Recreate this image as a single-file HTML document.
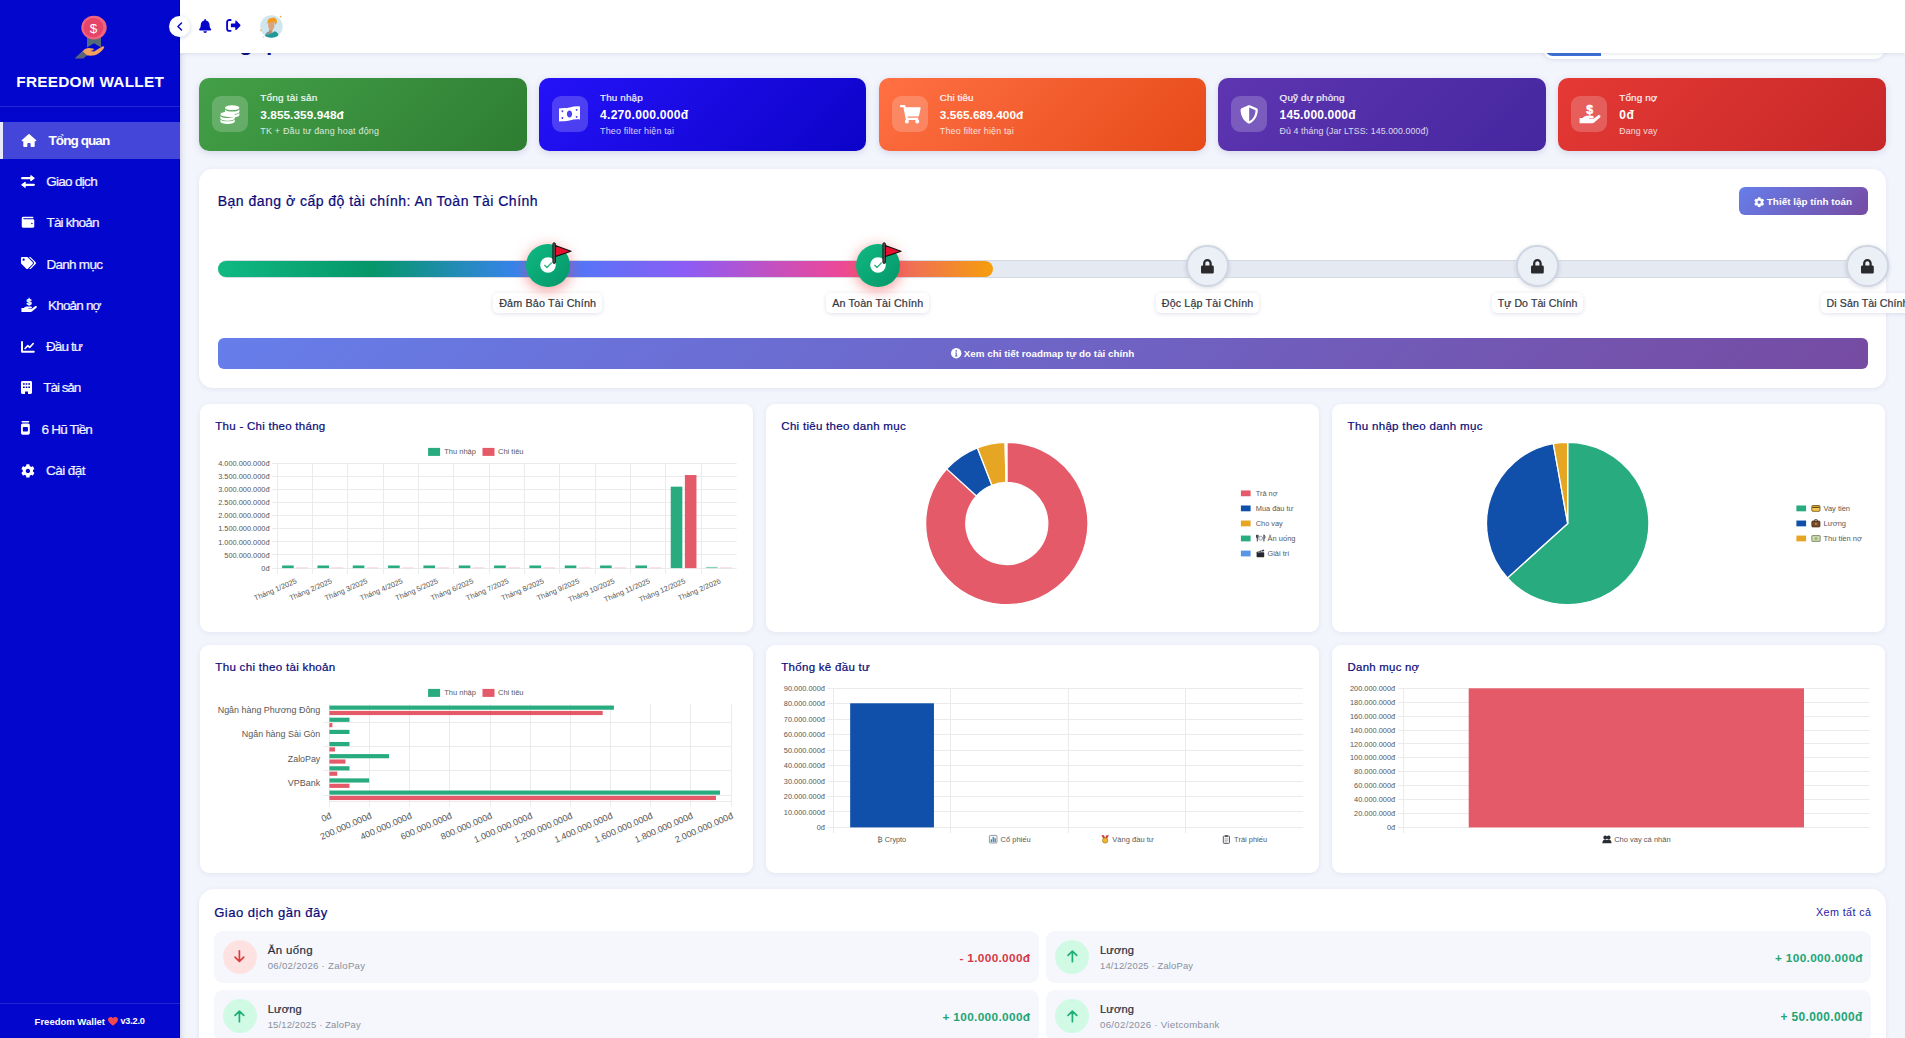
<!DOCTYPE html>
<html lang="vi"><head><meta charset="utf-8"><title>Freedom Wallet</title>
<style>
html,body{margin:0;padding:0}
html{overflow:hidden;width:1905px;height:1038px;background:#f3f5fd}
body{width:1905px;height:1038px;overflow:hidden;position:relative;background:#f3f5fd;font-family:"Liberation Sans",sans-serif;}
.a{position:absolute;box-sizing:border-box}
.t{position:absolute;white-space:nowrap;font-family:"Liberation Sans",sans-serif}
svg{display:block;overflow:visible}
svg text{font-family:"Liberation Sans",sans-serif}
#w{position:absolute;left:0;top:0;width:1905px;height:1038px;overflow:hidden}
</style></head><body>
<div id="w">
<span class="t" style="left:199px;top:29.7px;font-size:22px;line-height:26px;color:#0b0b78;font-weight:700;">Tổng quan</span>
<div class="a" style="left:1542.5px;top:20px;width:342.5px;height:38.7px;background:#fff;border-radius:10px;box-shadow:0 1px 4px rgba(50,60,100,.13);"></div>
<div class="a" style="left:1545px;top:22px;width:56px;height:34px;background:#3b6fd9;border-radius:8px 0 0 8px;"></div>
<div class="a" style="left:180px;top:0px;width:1725px;height:53px;background:#fff;box-shadow:0 1px 4px rgba(60,66,100,.13);"></div>
<svg class="a" style="left:198.8px;top:19px;" width="12.3" height="14" viewBox="0 0 448 512"><path fill="#0505cc" d="M224 512c35.320 0 63.970-28.650 63.970-64H160.030c0 35.350 28.650 64 63.970 64zm215.390-149.710c-19.320-20.760-55.470-51.990-55.470-154.290 0-77.700-54.480-139.900-127.940-155.160V32c0-17.670-14.320-32-31.980-32s-31.980 14.330-31.980 32v20.840C118.560 68.100 64.080 130.300 64.080 208c0 102.300-36.150 133.530-55.470 154.290-6 6.450-8.660 14.160-8.610 21.710.11 16.400 12.980 32 32.100 32h383.800c19.120 0 32-15.600 32.100-32 .05-7.550-2.610-15.270-8.610-21.710z"/></svg>
<svg class="a" style="left:226px;top:19.3px;" width="14" height="12.8" viewBox="0 0 14 13"><path fill="none" stroke="#0505cc" stroke-width="1.900" stroke-linecap="round" stroke-linejoin="round" d="M4.600 1H3.200C2 1 1 2 1 3.200v6.600C1 11 2 12 3.200 12h1.400"/><path fill="#0505cc" d="M9.300 2.300c0-.6.700-.9 1.100-.5l4 4.100c.3.300.3.800 0 1.100l-4 4.100c-.4.400-1.100.1-1.100-.5V8.400H5.700c-.5 0-.9-.4-.9-.9V5.500c0-.5.400-.9.900-.9h3.600z"/></svg>
<svg class="a" style="left:260px;top:15px;" width="23" height="23" viewBox="0 0 23 23"><defs><clipPath id="avc"><circle cx="11.400" cy="11.500" r="11.200"/></clipPath></defs><circle cx="11.400" cy="11.500" r="11.200" fill="#cfe6ee"/><g clip-path="url(#avc)"><path d="M4.800 23c0-3.800 1.800-5.800 4.200-6.400l2.400 1.600 3.400-2c2.600.6 4 2.800 4 6.800z" fill="#1f9a97"/><path d="M5.600 18.400l3.600-2 1.800 1.800-3.600 2z" fill="#8b98a0"/><path d="M9 14.600h3.400v3l-1.600 1-1.800-1.200z" fill="#c98e6a"/><path d="M8.200 8c0-1.800 1.400-2.800 3.200-2.800s3 1.200 3 3v2.800c0 2.200-1.300 4.400-3 4.400S8.200 13 8.200 11z" fill="#dca47c"/><path d="M7.800 9.400C6.800 5.400 8.600 3 11.400 3c1.600-1.200 4.800-.6 5.200 2 .8 1.800 0 3.800-1.400 4.800-.2-1.600-.8-2.600-1.800-3.200-1.400.8-3 1-4.200.8-.8.400-1.200 1-1.400 2z" fill="#f39a1f"/></g><circle cx="20.600" cy="1.600" r=".9" fill="#e8a93a"/><circle cx="1" cy="15.400" r=".8" fill="#f0b44a"/><circle cx="3.400" cy="22" r=".6" fill="#9fb3c8"/></svg>
<div class="a" style="left:0px;top:0px;width:180px;height:1038px;background:#0306cd;border-right:1px solid #0202a6;"></div>
<div class="a" style="left:180px;top:53px;width:7px;height:985px;background:linear-gradient(90deg,rgba(70,80,110,.15),rgba(70,80,110,.04) 50%,rgba(70,80,110,0));"></div>
<svg class="a" style="left:72px;top:13px;" width="36" height="48" viewBox="0 0 36 48"><path d="M15 24h14v10.400l-7-4.200-7 4.200z" fill="#546b78"/><ellipse cx="22" cy="14.600" rx="12.700" ry="11.800" fill="#f0657e"/><ellipse cx="21.400" cy="14.600" rx="10" ry="9.600" fill="#e6456a"/><text x="21.600" y="19.600" font-size="13.500" text-anchor="middle" fill="#fff">$</text><path d="M2.600 45.600l8.400-8.200 5 4.200-4.600 4z" fill="#5b6478"/><path d="M10.600 38.400c2.200-3 5.200-3.600 8-3.200l2.400.2c1 .2 1.200 1.400.2 1.800l-2.800.8 3.600.6 8.200-5.200c1.200-.8 2.600.4 1.800 1.600-2.400 3.400-5.600 6.200-9.200 7.200-2.400.6-4.800.4-7.400.4z" fill="#f3a15c"/></svg>
<span class="t" style="left:16.25px;top:72.5px;font-size:15.36px;line-height:18px;color:#fff;font-weight:700;letter-spacing:0.26px;">FREEDOM WALLET</span>
<div class="a" style="left:0px;top:106px;width:180px;height:1px;background:rgba(255,255,255,.13);"></div>
<div class="a" style="left:0px;top:122px;width:180px;height:37px;background:#4346d8;border-left:3px solid #e8e8fb;"></div>
<svg class="a" style="left:21px;top:134px;" width="16" height="13" viewBox="0 0 576 512"><path fill="#fff" d="M575.8 255.5c0 18-15 32.1-32 32.1h-32l.7 160.2c0 2.7-.2 5.4-.5 8.1V472c0 22.1-17.9 40-40 40H456c-1.1 0-2.2 0-3.3-.1c-1.4 .1-2.800 .1-4.200 .1H416 392c-22.1 0-40-17.9-40-40V448 384c0-17.7-14.300-32-32-32H256c-17.700 0-32 14.300-32 32v64 24c0 22.1-17.900 40-40 40H160 128.100c-1.500 0-3-.1-4.500-.2c-1.200 .1-2.400 .2-3.600 .2H104c-22.100 0-40-17.900-40-40V360c0-.9 0-1.900 .1-2.800V287.600H32c-18 0-32-14-32-32.100c0-9 3-17 10-24L266.400 8c7-7 15-8 22-8s15 2 21 7L564.800 231.500c8 7 12 15 11 24z"/></svg>
<span class="t" style="left:48.5px;top:132.5px;font-size:13.54px;line-height:16px;color:#fff;font-weight:700;letter-spacing:-0.93px;">Tổng quan</span>
<svg class="a" style="left:21px;top:175px;" width="14" height="13" viewBox="0 0 14 13"><path fill="none" stroke="#fff" stroke-width="2.300" stroke-linecap="round" d="M1.200 3.200H10.500M12.800 9.800H3.500"/><path fill="#fff" stroke="#fff" stroke-width="1" stroke-linejoin="round" d="M9.800 .5L13.400 3.200L9.800 5.900zM4.200 7.100L.6 9.800L4.200 12.500z"/></svg>
<span class="t" style="left:46.2px;top:173.7px;font-size:13.54px;line-height:16px;color:#f1f1ff;letter-spacing:-0.71px;-webkit-text-stroke:.22px currentColor;">Giao dịch</span>
<svg class="a" style="left:21px;top:216px;" width="14" height="12.5" viewBox="0 0 512 512"><path fill="#fff" d="M461.2 128H80c-8.84 0-16-7.16-16-16s7.16-16 16-16h384c8.84 0 16-7.16 16-16 0-26.51-21.49-48-48-48H64C28.65 32 0 60.65 0 96v320c0 35.35 28.65 64 64 64h397.2c28.02 0 50.8-21.53 50.8-48V176c0-26.47-22.78-48-50.8-48zM416 336c-17.67 0-32-14.33-32-32s14.33-32 32-32 32 14.33 32 32-14.33 32-32 32z"/></svg>
<span class="t" style="left:46.4px;top:214.8px;font-size:13.54px;line-height:16px;color:#f1f1ff;letter-spacing:-0.78px;-webkit-text-stroke:.22px currentColor;">Tài khoản</span>
<svg class="a" style="left:21px;top:257px;" width="15" height="12" viewBox="0 0 640 512"><path fill="#fff" d="M497.941 225.941L286.059 14.059A48 48 0 0 0 252.118 0H48C21.49 0 0 21.49 0 48v204.118a48 48 0 0 0 14.059 33.941l211.882 211.882c18.744 18.745 49.136 18.746 67.882 0l204.118-204.118c18.745-18.745 18.745-49.137 0-67.882zM112 160c-26.51 0-48-21.49-48-48s21.49-48 48-48 48 21.49 48 48-21.49 48-48 48zm513.941 133.823L421.823 497.941c-18.745 18.745-49.137 18.745-67.882 0l-.36-.36L527.64 323.522c16.999-16.999 26.36-39.6 26.36-63.64s-9.362-46.641-26.36-63.64L331.397 0h48.721a48 48 0 0 1 33.941 14.059l211.882 211.882c18.745 18.745 18.745 49.137 0 67.882z"/></svg>
<span class="t" style="left:46.4px;top:256.7px;font-size:13.54px;line-height:16px;color:#f1f1ff;letter-spacing:-0.73px;-webkit-text-stroke:.22px currentColor;">Danh mục</span>
<svg class="a" style="left:21px;top:298px;" width="16" height="13.8" viewBox="0 0 22 19"><path fill="#fff" transform="translate(0 .6)" d="M0.6 13.2h3.2c1.6-1.5 3.2-2.1 5-2.1h4.5c1 0 1.7.6 1.7 1.4 0 .8-.7 1.4-1.7 1.4h-3.1v.5h4.2l4.9-3.7c.8-.6 1.8-.5 2.3.1.5.6.4 1.5-.3 2.1l-5.8 4.9c-.6.5-1.300.8-2.100.8H0.600z"/><text x="10.9" y="9.500" font-size="12.500" font-weight="700" text-anchor="middle" fill="#fff" stroke="#fff" stroke-width=".5">$</text></svg>
<span class="t" style="left:48px;top:297.9px;font-size:13.54px;line-height:16px;color:#f1f1ff;letter-spacing:-0.83px;-webkit-text-stroke:.22px currentColor;">Khoản nợ</span>
<svg class="a" style="left:21.3px;top:340.5px;" width="13.8" height="11.8" viewBox="0 0 14 12"><path fill="none" stroke="#fff" stroke-width="2" stroke-linecap="round" stroke-linejoin="round" d="M1 1V11H13"/><path fill="none" stroke="#fff" stroke-width="1.700" stroke-linecap="round" stroke-linejoin="round" d="M4.2 7.6L6.800 4.800L8.800 6.600L12.400 2.600"/></svg>
<span class="t" style="left:46px;top:339.1px;font-size:13.54px;line-height:16px;color:#f1f1ff;letter-spacing:-0.92px;-webkit-text-stroke:.22px currentColor;">Đầu tư</span>
<svg class="a" style="left:21.3px;top:380.7px;" width="11" height="13" viewBox="0 0 11 13"><path fill="#fff" fill-rule="evenodd" d="M1.4 0h8.200c.8 0 1.400.6 1.400 1.400v10.200c0 .8-.6 1.400-1.400 1.400H7v-2.600H4V13H1.400C.6 13 0 12.400 0 11.600V1.400C0 .6.600 0 1.400 0zM2 2.200v1.600h1.700V2.200zM4.650 2.200v1.600h1.700V2.200zM7.300 2.200v1.600H9V2.200zM2 5.400V7h1.700V5.400zM4.650 5.400V7h1.700V5.400zM7.300 5.400V7H9V5.400z"/></svg>
<span class="t" style="left:43.3px;top:379.6px;font-size:13.54px;line-height:16px;color:#f1f1ff;letter-spacing:-1.05px;-webkit-text-stroke:.22px currentColor;">Tài sản</span>
<svg class="a" style="left:21.3px;top:421px;" width="8.8" height="13.8" viewBox="0 0 9 14"><path fill="#fff" fill-rule="evenodd" d="M1.300 0h6.400c.5 0 .8.300.8.800s-.3.800-.8.800H1.300C.800 1.600.5 1.300.5.800S.800 0 1.300 0zM1.800 2.600h5.400C8.200 2.600 9 3.400 9 4.400v7.800c0 1-.8 1.800-1.800 1.800H1.800C.8 14 0 13.200 0 12.200V4.400c0-1 .8-1.800 1.800-1.800zM2.600 6.200c-.4 0-.7.300-.7.700v3c0 .4.300.7.700.7h3.800c.4 0 .7-.3.700-.7v-3c0-.4-.3-.7-.7-.7z"/></svg>
<span class="t" style="left:41.6px;top:421.5px;font-size:13.54px;line-height:16px;color:#f1f1ff;letter-spacing:-0.83px;-webkit-text-stroke:.22px currentColor;">6 Hũ Tiền</span>
<svg class="a" style="left:21.3px;top:464px;" width="13.8" height="13.8" viewBox="0 0 512 512"><path fill="#fff" d="M487.4 315.7l-42.600-24.600c4.300-23.200 4.300-47 0-70.200l42.600-24.600c4.900-2.800 7.100-8.600 5.500-14-11.100-35.600-30-67.800-54.700-94.600-3.800-4.100-10-5.100-14.800-2.300L380.800 110c-17.900-15.400-38.500-27.300-60.800-35.100V25.800c0-5.600-3.900-10.500-9.400-11.700-36.700-8.200-74.300-7.800-109.200 0-5.500 1.200-9.400 6.100-9.400 11.700V75c-22.200 7.900-42.800 19.800-60.800 35.100L88.700 85.500c-4.900-2.800-11-1.900-14.800 2.300-24.700 26.700-43.600 58.900-54.700 94.600-1.700 5.400.6 11.200 5.500 14L67.300 221c-4.300 23.200-4.300 47 0 70.200l-42.600 24.600c-4.900 2.800-7.100 8.600-5.500 14 11.100 35.600 30 67.800 54.700 94.600 3.800 4.100 10 5.100 14.800 2.300l42.600-24.600c17.900 15.400 38.500 27.300 60.800 35.100v49.200c0 5.600 3.900 10.500 9.400 11.700 36.700 8.200 74.300 7.800 109.200 0 5.500-1.200 9.400-6.100 9.400-11.700v-49.200c22.200-7.900 42.800-19.800 60.800-35.100l42.600 24.600c4.900 2.800 11 1.900 14.800-2.300 24.700-26.700 43.600-58.900 54.700-94.600 1.500-5.500-.7-11.300-5.600-14.100zM256 336c-44.100 0-80-35.900-80-80s35.900-80 80-80 80 35.900 80 80-35.900 80-80 80z"/></svg>
<span class="t" style="left:46px;top:462.8px;font-size:13.54px;line-height:16px;color:#f1f1ff;letter-spacing:-0.58px;-webkit-text-stroke:.22px currentColor;">Cài đặt</span>
<div class="a" style="left:0px;top:1002.5px;width:180px;height:1px;background:rgba(255,255,255,.13);"></div>
<span class="t" style="left:34.6px;top:1016px;font-size:9.51px;line-height:11px;color:#fff;font-weight:700;">Freedom Wallet</span>
<svg class="a" style="left:108px;top:1016.8px;" width="10" height="9" viewBox="0 0 10 9"><path d="M5 8.800C1.800 6.200 0 4.600 0 2.600 0 1.100 1.100 0 2.600 0 3.600 0 4.500.5 5 1.300 5.500.5 6.400 0 7.400 0 8.900 0 10 1.100 10 2.600c0 2-1.800 3.600-5 6.200z" fill="#f4484e"/></svg>
<span class="t" style="left:120.4px;top:1016px;font-size:9.17px;line-height:11px;color:#fff;font-weight:700;letter-spacing:-0.18px;">v3.2.0</span>
<div class="a" style="left:169px;top:15.8px;width:21px;height:21px;background:#fff;border-radius:50%;box-shadow:0 1px 4px rgba(40,50,140,.22);"></div>
<svg class="a" style="left:176.6px;top:21.8px;" width="5.4" height="9" viewBox="0 0 6 10"><path fill="none" stroke="#0505cc" stroke-width="1.600" stroke-linecap="round" stroke-linejoin="round" d="M5 1L1 5L5 9"/></svg>
<div class="a" style="left:199px;top:78px;width:327.6px;height:72.8px;background:linear-gradient(135deg,#43a047 0%,#2e7d32 100%);border-radius:10px;box-shadow:0 2px 7px rgba(40,50,110,.15);"></div>
<div class="a" style="left:212px;top:96px;width:36px;height:36px;background:rgba(255,255,255,.2);border-radius:9px;"></div>
<svg class="a" style="left:220px;top:103.5px;" width="20" height="20" viewBox="0 0 20 20"><path fill="#fff" d="M5 8.65 v2.4 a7.2 2.45 0 0 0 14.4 0 v-2.4 a7.2 2.2 0 0 1 -14.4 0z"/><path fill="#fff" d="M5 5.35 v2.4 a7.2 2.45 0 0 0 14.4 0 v-2.4 a7.2 2.2 0 0 1 -14.4 0z"/><ellipse cx="12.2" cy="3.65" rx="7.2" ry="2.45" fill="#fff"/><path fill="#fff" d="M0.4 15.15 v2.4 a7.2 2.45 0 0 0 14.4 0 v-2.4 a7.2 2.2 0 0 1 -14.4 0z"/><path fill="#fff" d="M0.4 11.85 v2.4 a7.2 2.45 0 0 0 14.4 0 v-2.4 a7.2 2.2 0 0 1 -14.4 0z"/><ellipse cx="7.6" cy="10.15" rx="7.2" ry="2.45" fill="#fff"/></svg>
<span class="t" style="left:260.3px;top:92.1px;font-size:9.98px;line-height:12px;color:#fff;letter-spacing:0.19px;opacity:0.93;-webkit-text-stroke:.22px currentColor;">Tổng tài sản</span>
<span class="t" style="left:260.3px;top:108px;font-size:11.81px;line-height:14px;color:#fff;font-weight:700;letter-spacing:0.06px;">3.855.359.948đ</span>
<span class="t" style="left:260.3px;top:126px;font-size:8.98px;line-height:11px;color:#fff;letter-spacing:0.19px;opacity:0.8;">TK + Đầu tư đang hoạt động</span>
<div class="a" style="left:538.75px;top:78px;width:327.6px;height:72.8px;background:linear-gradient(135deg,#2512f8 0%,#0c03c8 100%);border-radius:10px;box-shadow:0 2px 7px rgba(40,50,110,.15);"></div>
<div class="a" style="left:551.75px;top:96px;width:36px;height:36px;background:rgba(255,255,255,.2);border-radius:9px;"></div>
<svg class="a" style="left:559.15px;top:106.2px;" width="21" height="16" viewBox="0 0 21 16"><path fill="#fff" fill-rule="evenodd" d="M0 2.600C3.500 1.600 7 2.200 10.500 1.400S17.500 0 21 .4V13.400c-3.500-.4-7 .2-10.500 1S3.500 15 0 15.600zM10.500 4.600c-1.500 0-2.600 1.500-2.600 3.400s1.100 3.400 2.600 3.400 2.600-1.500 2.600-3.400-1.100-3.400-2.600-3.400zM3.400 4.300a.9.900 0 1 0 .01 0zM3.400 11.100a.9.900 0 1 0 .01 0zM17.600 3a.9.900 0 1 0 .01 0zM17.600 9.900a.9.900 0 1 0 .01 0z"/></svg>
<span class="t" style="left:600.05px;top:92.1px;font-size:9.85px;line-height:12px;color:#fff;letter-spacing:0.15px;opacity:0.93;-webkit-text-stroke:.22px currentColor;">Thu nhập</span>
<span class="t" style="left:600.05px;top:107.5px;font-size:12.14px;line-height:15px;color:#fff;font-weight:700;letter-spacing:0.24px;">4.270.000.000đ</span>
<span class="t" style="left:600.05px;top:126px;font-size:8.95px;line-height:11px;color:#fff;letter-spacing:0.15px;opacity:0.8;">Theo filter hiện tại</span>
<div class="a" style="left:878.5px;top:78px;width:327.6px;height:72.8px;background:linear-gradient(135deg,#ff7043 0%,#e64a19 100%);border-radius:10px;box-shadow:0 2px 7px rgba(40,50,110,.15);"></div>
<div class="a" style="left:891.5px;top:96px;width:36px;height:36px;background:rgba(255,255,255,.2);border-radius:9px;"></div>
<svg class="a" style="left:899.5px;top:105px;" width="20.7" height="18.4" viewBox="0 0 576 512"><path fill="#fff" d="M528.120 301.319l47.273-208C578.806 78.301 567.391 64 551.990 64H159.208l-9.166-44.810C147.758 8.021 137.930 0 126.529 0H24C10.745 0 0 10.745 0 24v16c0 13.255 10.745 24 24 24h69.883l70.248 343.435C147.325 417.100 136 435.222 136 456c0 30.928 25.072 56 56 56s56-25.072 56-56c0-15.674-6.447-29.835-16.824-40h209.647C430.447 426.165 424 440.326 424 456c0 30.928 25.072 56 56 56s56-25.072 56-56c0-22.172-12.888-41.332-31.579-50.405l5.517-24.276c3.413-15.018-8.002-29.319-23.403-29.319H218.117l-6.545-32h293.145c11.206 0 20.920-7.754 23.403-18.681z"/></svg>
<span class="t" style="left:939.8px;top:92.1px;font-size:9.74px;line-height:12px;color:#fff;letter-spacing:0.07px;opacity:0.93;-webkit-text-stroke:.22px currentColor;">Chi tiêu</span>
<span class="t" style="left:939.8px;top:108px;font-size:11.81px;line-height:14px;color:#fff;font-weight:700;letter-spacing:0.06px;">3.565.689.400đ</span>
<span class="t" style="left:939.8px;top:126px;font-size:8.95px;line-height:11px;color:#fff;letter-spacing:0.15px;opacity:0.8;">Theo filter hiện tại</span>
<div class="a" style="left:1218.25px;top:78px;width:327.6px;height:72.8px;background:linear-gradient(135deg,#5e35b1 0%,#4527a0 100%);border-radius:10px;box-shadow:0 2px 7px rgba(40,50,110,.15);"></div>
<div class="a" style="left:1231.25px;top:96px;width:36px;height:36px;background:rgba(255,255,255,.2);border-radius:9px;"></div>
<svg class="a" style="left:1240.45px;top:104.8px;" width="18.4" height="18.8" viewBox="0 0 512 512"><path fill="#fff" d="M466.500 83.700l-192-80a48.150 48.150 0 0 0-36.900 0l-192 80C27.700 91.100 16 108.600 16 128c0 198.500 114.500 335.700 221.500 380.300 11.800 4.900 25.100 4.900 36.900 0C360.100 472.600 496 349.300 496 128c0-19.400-11.700-36.900-29.500-44.300zM256.100 446.300l-.1-381 175.900 73.300c-3.300 151.400-82.100 261.100-175.800 307.700z"/></svg>
<span class="t" style="left:1279.55px;top:92.1px;font-size:9.88px;line-height:12px;color:#fff;letter-spacing:0.16px;opacity:0.93;-webkit-text-stroke:.22px currentColor;">Quỹ dự phòng</span>
<span class="t" style="left:1279.55px;top:108px;font-size:12.01px;line-height:14px;color:#fff;font-weight:700;letter-spacing:0.17px;">145.000.000đ</span>
<span class="t" style="left:1279.55px;top:126px;font-size:8.79px;line-height:11px;color:#fff;letter-spacing:0.09px;opacity:0.8;">Đủ 4 tháng (Jar LTSS: 145.000.000đ)</span>
<div class="a" style="left:1558px;top:78px;width:327.6px;height:72.8px;background:linear-gradient(135deg,#e53935 0%,#c62828 100%);border-radius:10px;box-shadow:0 2px 7px rgba(40,50,110,.15);"></div>
<div class="a" style="left:1571px;top:96px;width:36px;height:36px;background:rgba(255,255,255,.2);border-radius:9px;"></div>
<svg class="a" style="left:1578.7px;top:104.3px;" width="21.6" height="19.4" viewBox="0 0 22 19"><path fill="#fff" transform="translate(0 .6)" d="M0.6 13.2h3.2c1.6-1.5 3.2-2.1 5-2.1h4.5c1 0 1.7.6 1.7 1.4 0 .8-.7 1.4-1.7 1.4h-3.1v.5h4.2l4.9-3.7c.8-.6 1.8-.5 2.3.1.5.6.4 1.5-.3 2.1l-5.8 4.9c-.6.5-1.300.8-2.100.8H0.600z"/><text x="10.9" y="9.500" font-size="12.500" font-weight="700" text-anchor="middle" fill="#fff" stroke="#fff" stroke-width=".5">$</text></svg>
<span class="t" style="left:1619.3px;top:92.1px;font-size:9.84px;line-height:12px;color:#fff;letter-spacing:0.15px;opacity:0.93;-webkit-text-stroke:.22px currentColor;">Tổng nợ</span>
<span class="t" style="left:1619.3px;top:108px;font-size:12.06px;line-height:14px;color:#fff;font-weight:700;letter-spacing:0.42px;">0đ</span>
<span class="t" style="left:1619.3px;top:126px;font-size:8.8px;line-height:11px;color:#fff;letter-spacing:0.12px;opacity:0.8;">Đang vay</span>
<div class="a" style="left:199px;top:169px;width:1687px;height:219px;background:#fff;box-shadow:0 1px 5px rgba(45,55,90,.085);border-radius:14px;"></div>
<span class="t" style="left:217.7px;top:192.5px;font-size:14.06px;line-height:17px;color:#0b0b78;letter-spacing:0.46px;-webkit-text-stroke:.22px currentColor;">Bạn đang ở cấp độ tài chính: An Toàn Tài Chính</span>
<div class="a" style="left:1739.3px;top:187px;width:128.5px;height:28px;background:linear-gradient(135deg,#667eea 0%,#764ba2 100%);border-radius:6px;"></div>
<svg class="a" style="left:1754px;top:196.5px;" width="10.4" height="10.4" viewBox="0 0 512 512"><path fill="#fff" d="M487.4 315.7l-42.600-24.600c4.300-23.200 4.300-47 0-70.200l42.600-24.600c4.900-2.800 7.100-8.600 5.500-14-11.100-35.600-30-67.800-54.700-94.600-3.800-4.100-10-5.100-14.800-2.300L380.800 110c-17.900-15.400-38.500-27.300-60.800-35.100V25.800c0-5.600-3.900-10.500-9.400-11.700-36.700-8.200-74.300-7.800-109.200 0-5.500 1.200-9.400 6.100-9.400 11.700V75c-22.200 7.900-42.800 19.800-60.800 35.100L88.700 85.500c-4.900-2.800-11-1.900-14.800 2.300-24.700 26.700-43.600 58.900-54.700 94.600-1.700 5.400.6 11.200 5.500 14L67.300 221c-4.300 23.200-4.300 47 0 70.200l-42.600 24.600c-4.900 2.800-7.100 8.600-5.500 14 11.100 35.600 30 67.800 54.700 94.600 3.800 4.100 10 5.100 14.800 2.300l42.600-24.600c17.900 15.400 38.500 27.300 60.800 35.100v49.200c0 5.600 3.900 10.500 9.400 11.700 36.700 8.200 74.300 7.800 109.200 0 5.500-1.200 9.400-6.100 9.400-11.700v-49.200c22.200-7.900 42.800-19.800 60.800-35.100l42.600 24.600c4.900 2.800 11 1.900 14.800-2.300 24.700-26.700 43.600-58.900 54.700-94.600 1.500-5.500-.7-11.300-5.600-14.100zM256 336c-44.100 0-80-35.900-80-80s35.900-80 80-80 80 35.900 80 80-35.900 80-80 80z"/></svg>
<span class="t" style="left:1766.8px;top:195.9px;font-size:9.86px;line-height:12px;color:#fff;font-weight:700;letter-spacing:0.03px;">Thiết lập tính toán</span>
<div class="a" style="left:217.5px;top:260.1px;width:1651px;height:17.6px;background:#e5e9f1;border:1px solid #d6dbe5;border-radius:9px;"></div>
<div class="a" style="left:218px;top:260.8px;width:775px;height:16.4px;background:linear-gradient(90deg,#10b981 0%,#059669 20%,#3b82f6 40%,#8b5cf6 60%,#ec4899 80%,#f59e0b 100%);border-radius:9px;"></div>
<div class="a" style="left:493.2px;top:293px;width:109px;height:20px;background:#fff;border-radius:5px;box-shadow:0 1px 4px rgba(60,70,130,.16);"></div>
<span class="t" style="left:499.2px;top:296.7px;font-size:10.73px;line-height:13px;color:#33373f;letter-spacing:0.18px;-webkit-text-stroke:.22px currentColor;">Đảm Bảo Tài Chính</span>
<div class="a" style="left:526.3px;top:243.9px;width:43.4px;height:43.4px;background:linear-gradient(135deg,#10b981 0%,#059669 100%);border-radius:50%;box-shadow:0 3px 13px 1px rgba(239,68,68,.5);"></div>
<svg class="a" style="left:540px;top:257.2px;" width="16" height="16" viewBox="0 0 16 16"><circle cx="8" cy="8" r="7.800" fill="#fff"/><path d="M4.700 8.300L7 10.500L11.400 5.900" fill="none" stroke="#23b07c" stroke-width="1.250" stroke-linecap="round" stroke-linejoin="round"/></svg>
<svg class="a" style="left:552px;top:242.4px;" width="21" height="22" viewBox="0 0 21 22"><path d="M2.600 3.200L19 9.300L2.600 14.800z" fill="#e8112d" stroke="#111" stroke-width="1.200" stroke-linejoin="round"/><rect x=".9" y=".8" width="2.500" height="20.600" rx="1.200" fill="#555" stroke="#111" stroke-width=".9"/></svg>
<div class="a" style="left:826.2px;top:293px;width:103px;height:20px;background:#fff;border-radius:5px;box-shadow:0 1px 4px rgba(60,70,130,.16);"></div>
<span class="t" style="left:832.2px;top:296.7px;font-size:10.72px;line-height:13px;color:#33373f;letter-spacing:0.16px;-webkit-text-stroke:.22px currentColor;">An Toàn Tài Chính</span>
<div class="a" style="left:856.3px;top:243.9px;width:43.4px;height:43.4px;background:linear-gradient(135deg,#10b981 0%,#059669 100%);border-radius:50%;box-shadow:0 3px 13px 1px rgba(239,68,68,.5);"></div>
<svg class="a" style="left:870px;top:257.2px;" width="16" height="16" viewBox="0 0 16 16"><circle cx="8" cy="8" r="7.800" fill="#fff"/><path d="M4.700 8.300L7 10.500L11.400 5.900" fill="none" stroke="#23b07c" stroke-width="1.250" stroke-linecap="round" stroke-linejoin="round"/></svg>
<svg class="a" style="left:882px;top:242.4px;" width="21" height="22" viewBox="0 0 21 22"><path d="M2.600 3.200L19 9.300L2.600 14.800z" fill="#e8112d" stroke="#111" stroke-width="1.200" stroke-linejoin="round"/><rect x=".9" y=".8" width="2.500" height="20.600" rx="1.200" fill="#555" stroke="#111" stroke-width=".9"/></svg>
<div class="a" style="left:1155.75px;top:293px;width:103.5px;height:20px;background:#fff;border-radius:5px;box-shadow:0 1px 4px rgba(60,70,130,.16);"></div>
<span class="t" style="left:1161.75px;top:296.7px;font-size:10.7px;line-height:13px;color:#33373f;letter-spacing:0.16px;-webkit-text-stroke:.22px currentColor;">Độc Lập Tài Chính</span>
<div class="a" style="left:1186.4px;top:244.8px;width:42.4px;height:42.4px;background:#ebeff6;border:2px solid #cfd6e1;border-radius:50%;box-shadow:0 1px 4px rgba(60,70,110,.18);"></div>
<svg class="a" style="left:1201.2px;top:258.7px;" width="12.8" height="14.6" viewBox="0 0 448 512"><path fill="#2a2a2d" d="M400 224h-24v-72C376 68.200 307.800 0 224 0S72 68.200 72 152v72H48c-26.500 0-48 21.500-48 48v192c0 26.500 21.500 48 48 48h352c26.500 0 48-21.500 48-48V272c0-26.500-21.500-48-48-48zm-104 0H152v-72c0-39.700 32.300-72 72-72s72 32.300 72 72v72z"/></svg>
<div class="a" style="left:1491.75px;top:293px;width:91.5px;height:20px;background:#fff;border-radius:5px;box-shadow:0 1px 4px rgba(60,70,130,.16);"></div>
<span class="t" style="left:1497.75px;top:296.7px;font-size:10.55px;line-height:13px;color:#33373f;letter-spacing:0.08px;-webkit-text-stroke:.22px currentColor;">Tự Do Tài Chính</span>
<div class="a" style="left:1516.4px;top:244.8px;width:42.4px;height:42.4px;background:#ebeff6;border:2px solid #cfd6e1;border-radius:50%;box-shadow:0 1px 4px rgba(60,70,110,.18);"></div>
<svg class="a" style="left:1531.2px;top:258.7px;" width="12.8" height="14.6" viewBox="0 0 448 512"><path fill="#2a2a2d" d="M400 224h-24v-72C376 68.200 307.800 0 224 0S72 68.200 72 152v72H48c-26.500 0-48 21.500-48 48v192c0 26.500 21.500 48 48 48h352c26.500 0 48-21.500 48-48V272c0-26.500-21.500-48-48-48zm-104 0H152v-72c0-39.700 32.300-72 72-72s72 32.300 72 72v72z"/></svg>
<div class="a" style="left:1820.5px;top:293px;width:94px;height:20px;background:#fff;border-radius:5px;box-shadow:0 1px 4px rgba(60,70,130,.16);"></div>
<span class="t" style="left:1826.5px;top:296.7px;font-size:10.6px;line-height:13px;color:#33373f;letter-spacing:0.1px;-webkit-text-stroke:.22px currentColor;">Di Sản Tài Chính</span>
<div class="a" style="left:1846.4px;top:244.8px;width:42.4px;height:42.4px;background:#ebeff6;border:2px solid #cfd6e1;border-radius:50%;box-shadow:0 1px 4px rgba(60,70,110,.18);"></div>
<svg class="a" style="left:1861.2px;top:258.7px;" width="12.8" height="14.6" viewBox="0 0 448 512"><path fill="#2a2a2d" d="M400 224h-24v-72C376 68.200 307.800 0 224 0S72 68.200 72 152v72H48c-26.500 0-48 21.500-48 48v192c0 26.500 21.500 48 48 48h352c26.500 0 48-21.500 48-48V272c0-26.500-21.500-48-48-48zm-104 0H152v-72c0-39.700 32.300-72 72-72s72 32.300 72 72v72z"/></svg>
<div class="a" style="left:218px;top:337.8px;width:1650px;height:31px;background:linear-gradient(135deg,#667eea 0%,#764ba2 100%);border-radius:6px;"></div>
<svg class="a" style="left:950.6px;top:348.2px;" width="10.4" height="10.4" viewBox="0 0 12 12"><circle cx="6" cy="6" r="6" fill="#fff"/><circle cx="6" cy="3.200" r="1" fill="#6d6bd0"/><path d="M4.700 5.200h2v3.600h.800v1H4.500v-1h.9V6.200h-.7z" fill="#6d6bd0"/></svg>
<span class="t" style="left:963.8px;top:347.8px;font-size:9.82px;line-height:12px;color:#fff;font-weight:700;letter-spacing:0.01px;">Xem chi tiết roadmap tự do tài chính</span>
<div class="a" style="left:200px;top:404px;width:553.3px;height:228px;background:#fff;box-shadow:0 1px 5px rgba(45,55,90,.085);border-radius:9px;"></div>
<div class="a" style="left:766px;top:404px;width:553.3px;height:228px;background:#fff;box-shadow:0 1px 5px rgba(45,55,90,.085);border-radius:9px;"></div>
<div class="a" style="left:1332px;top:404px;width:553.3px;height:228px;background:#fff;box-shadow:0 1px 5px rgba(45,55,90,.085);border-radius:9px;"></div>
<div class="a" style="left:200px;top:645px;width:553.3px;height:228px;background:#fff;box-shadow:0 1px 5px rgba(45,55,90,.085);border-radius:9px;"></div>
<div class="a" style="left:766px;top:645px;width:553.3px;height:228px;background:#fff;box-shadow:0 1px 5px rgba(45,55,90,.085);border-radius:9px;"></div>
<div class="a" style="left:1332px;top:645px;width:553.3px;height:228px;background:#fff;box-shadow:0 1px 5px rgba(45,55,90,.085);border-radius:9px;"></div>
<span class="t" style="left:215.3px;top:419.2px;font-size:11.53px;line-height:14px;color:#0b0b78;letter-spacing:0.26px;-webkit-text-stroke:.22px currentColor;">Thu - Chi theo tháng</span>
<span class="t" style="left:781.3px;top:419.2px;font-size:11.55px;line-height:14px;color:#0b0b78;letter-spacing:0.27px;-webkit-text-stroke:.22px currentColor;">Chi tiêu theo danh mục</span>
<span class="t" style="left:1347.6px;top:419.2px;font-size:11.57px;line-height:14px;color:#0b0b78;letter-spacing:0.3px;-webkit-text-stroke:.22px currentColor;">Thu nhập theo danh mục</span>
<span class="t" style="left:215.3px;top:660.2px;font-size:11.6px;line-height:14px;color:#0b0b78;letter-spacing:0.28px;-webkit-text-stroke:.22px currentColor;">Thu chi theo tài khoản</span>
<span class="t" style="left:781.3px;top:660.2px;font-size:11.53px;line-height:14px;color:#0b0b78;letter-spacing:0.28px;-webkit-text-stroke:.22px currentColor;">Thống kê đầu tư</span>
<span class="t" style="left:1347.6px;top:660.2px;font-size:11.41px;line-height:14px;color:#0b0b78;letter-spacing:0.25px;-webkit-text-stroke:.22px currentColor;">Danh mục nợ</span>
<svg class="a" style="left:0;top:0" width="1905" height="1038" viewBox="0 0 1905 1038"><rect x="428.1" y="447.9" width="12" height="8" fill="#27ab7f" /><text x="444.2" y="451.2" font-size="7.4" text-anchor="start" fill="#585858" dy=".355em" textLength="31.8" lengthAdjust="spacingAndGlyphs">Thu nhập</text><rect x="482.5" y="447.9" width="12" height="8" fill="#e55a69" /><text x="498" y="451.2" font-size="7.4" text-anchor="start" fill="#585858" dy=".355em" textLength="25.5" lengthAdjust="spacingAndGlyphs">Chi tiêu</text><path d="M271.9 568.5L736.6 568.5" stroke="#ebebee" stroke-width="1" fill="none"/><text x="269.5" y="568.1" font-size="7.4" text-anchor="end" fill="#585858" dy=".355em">0đ</text><path d="M271.9 554.5L736.6 554.5" stroke="#ebebee" stroke-width="1" fill="none"/><text x="269.5" y="554.99" font-size="7.4" text-anchor="end" fill="#585858" dy=".355em">500.000.000đ</text><path d="M271.9 541.5L736.6 541.5" stroke="#ebebee" stroke-width="1" fill="none"/><text x="269.5" y="541.88" font-size="7.4" text-anchor="end" fill="#585858" dy=".355em">1.000.000.000đ</text><path d="M271.9 528.5L736.6 528.5" stroke="#ebebee" stroke-width="1" fill="none"/><text x="269.5" y="528.76" font-size="7.4" text-anchor="end" fill="#585858" dy=".355em">1.500.000.000đ</text><path d="M271.9 515.5L736.6 515.5" stroke="#ebebee" stroke-width="1" fill="none"/><text x="269.5" y="515.65" font-size="7.4" text-anchor="end" fill="#585858" dy=".355em">2.000.000.000đ</text><path d="M271.9 502.5L736.6 502.5" stroke="#ebebee" stroke-width="1" fill="none"/><text x="269.5" y="502.54" font-size="7.4" text-anchor="end" fill="#585858" dy=".355em">2.500.000.000đ</text><path d="M271.9 489.5L736.6 489.5" stroke="#ebebee" stroke-width="1" fill="none"/><text x="269.5" y="489.43" font-size="7.4" text-anchor="end" fill="#585858" dy=".355em">3.000.000.000đ</text><path d="M271.9 476.5L736.6 476.5" stroke="#ebebee" stroke-width="1" fill="none"/><text x="269.5" y="476.31" font-size="7.4" text-anchor="end" fill="#585858" dy=".355em">3.500.000.000đ</text><path d="M271.9 463.5L736.6 463.5" stroke="#ebebee" stroke-width="1" fill="none"/><text x="269.5" y="463.2" font-size="7.4" text-anchor="end" fill="#585858" dy=".355em">4.000.000.000đ</text><path d="M277.5 463.2L277.5 573.7" stroke="#ebebee" stroke-width="1" fill="none"/><path d="M312.5 463.2L312.5 573.7" stroke="#ebebee" stroke-width="1" fill="none"/><path d="M347.5 463.2L347.5 573.7" stroke="#ebebee" stroke-width="1" fill="none"/><path d="M383.5 463.2L383.5 573.7" stroke="#ebebee" stroke-width="1" fill="none"/><path d="M418.5 463.2L418.5 573.7" stroke="#ebebee" stroke-width="1" fill="none"/><path d="M453.5 463.2L453.5 573.7" stroke="#ebebee" stroke-width="1" fill="none"/><path d="M489.5 463.2L489.5 573.7" stroke="#ebebee" stroke-width="1" fill="none"/><path d="M524.5 463.2L524.5 573.7" stroke="#ebebee" stroke-width="1" fill="none"/><path d="M559.5 463.2L559.5 573.7" stroke="#ebebee" stroke-width="1" fill="none"/><path d="M595.5 463.2L595.5 573.7" stroke="#ebebee" stroke-width="1" fill="none"/><path d="M630.5 463.2L630.5 573.7" stroke="#ebebee" stroke-width="1" fill="none"/><path d="M665.5 463.2L665.5 573.7" stroke="#ebebee" stroke-width="1" fill="none"/><path d="M701.5 463.2L701.5 573.7" stroke="#ebebee" stroke-width="1" fill="none"/><rect x="282.1" y="565.48" width="11.59" height="2.62" fill="#27ab7f" opacity="1"/><rect x="296.24" y="567.6" width="11.59" height="0.5" fill="#e55a69" opacity=".45"/><text x="0" y="0" transform="translate(296.27 580.5) rotate(-23)" font-size="7.4" text-anchor="end" fill="#585858" dy=".355em">Tháng 1/2025</text><rect x="317.44" y="565.48" width="11.59" height="2.62" fill="#27ab7f" opacity="1"/><rect x="331.57" y="567.6" width="11.59" height="0.5" fill="#e55a69" opacity=".45"/><text x="0" y="0" transform="translate(331.6 580.5) rotate(-23)" font-size="7.4" text-anchor="end" fill="#585858" dy=".355em">Tháng 2/2025</text><rect x="352.77" y="565.48" width="11.59" height="2.62" fill="#27ab7f" opacity="1"/><rect x="366.9" y="567.6" width="11.59" height="0.5" fill="#e55a69" opacity=".45"/><text x="0" y="0" transform="translate(366.93 580.5) rotate(-23)" font-size="7.4" text-anchor="end" fill="#585858" dy=".355em">Tháng 3/2025</text><rect x="388.1" y="565.48" width="11.59" height="2.62" fill="#27ab7f" opacity="1"/><rect x="402.23" y="567.6" width="11.59" height="0.5" fill="#e55a69" opacity=".45"/><text x="0" y="0" transform="translate(402.26 580.5) rotate(-23)" font-size="7.4" text-anchor="end" fill="#585858" dy=".355em">Tháng 4/2025</text><rect x="423.43" y="565.48" width="11.59" height="2.62" fill="#27ab7f" opacity="1"/><rect x="437.56" y="567.6" width="11.59" height="0.5" fill="#e55a69" opacity=".45"/><text x="0" y="0" transform="translate(437.59 580.5) rotate(-23)" font-size="7.4" text-anchor="end" fill="#585858" dy=".355em">Tháng 5/2025</text><rect x="458.76" y="565.48" width="11.59" height="2.62" fill="#27ab7f" opacity="1"/><rect x="472.89" y="567.6" width="11.59" height="0.5" fill="#e55a69" opacity=".45"/><text x="0" y="0" transform="translate(472.92 580.5) rotate(-23)" font-size="7.4" text-anchor="end" fill="#585858" dy=".355em">Tháng 6/2025</text><rect x="494.09" y="565.48" width="11.59" height="2.62" fill="#27ab7f" opacity="1"/><rect x="508.22" y="567.6" width="11.59" height="0.5" fill="#e55a69" opacity=".45"/><text x="0" y="0" transform="translate(508.25 580.5) rotate(-23)" font-size="7.4" text-anchor="end" fill="#585858" dy=".355em">Tháng 7/2025</text><rect x="529.42" y="565.48" width="11.59" height="2.62" fill="#27ab7f" opacity="1"/><rect x="543.55" y="567.6" width="11.59" height="0.5" fill="#e55a69" opacity=".45"/><text x="0" y="0" transform="translate(543.58 580.5) rotate(-23)" font-size="7.4" text-anchor="end" fill="#585858" dy=".355em">Tháng 8/2025</text><rect x="564.75" y="565.48" width="11.59" height="2.62" fill="#27ab7f" opacity="1"/><rect x="578.88" y="567.6" width="11.59" height="0.5" fill="#e55a69" opacity=".45"/><text x="0" y="0" transform="translate(578.91 580.5) rotate(-23)" font-size="7.4" text-anchor="end" fill="#585858" dy=".355em">Tháng 9/2025</text><rect x="600.08" y="565.48" width="11.59" height="2.62" fill="#27ab7f" opacity="1"/><rect x="614.21" y="567.6" width="11.59" height="0.5" fill="#e55a69" opacity=".45"/><text x="0" y="0" transform="translate(614.24 580.5) rotate(-23)" font-size="7.4" text-anchor="end" fill="#585858" dy=".355em">Tháng 10/2025</text><rect x="635.41" y="565.48" width="11.59" height="2.62" fill="#27ab7f" opacity="1"/><rect x="649.54" y="567.6" width="11.59" height="0.5" fill="#e55a69" opacity=".45"/><text x="0" y="0" transform="translate(649.57 580.5) rotate(-23)" font-size="7.4" text-anchor="end" fill="#585858" dy=".355em">Tháng 11/2025</text><rect x="670.74" y="486.67" width="11.59" height="81.43" fill="#27ab7f" opacity="1"/><rect x="684.88" y="475.05" width="11.59" height="93.05" fill="#e55a69" opacity="1"/><text x="0" y="0" transform="translate(684.9 580.5) rotate(-23)" font-size="7.4" text-anchor="end" fill="#585858" dy=".355em">Tháng 12/2025</text><rect x="706.07" y="566.92" width="11.59" height="1.18" fill="#27ab7f" opacity=".55"/><rect x="720.21" y="567.6" width="11.59" height="0.5" fill="#e55a69" opacity=".45"/><text x="0" y="0" transform="translate(720.23 580.5) rotate(-23)" font-size="7.4" text-anchor="end" fill="#585858" dy=".355em">Tháng 2/2026</text><path d="M1006.8 442.3A81.2 81.2 0 1 1 946.74 468.86L976.47 495.91A41 41 0 1 0 1006.8 482.5Z" fill="#e55a69" stroke="#fff" stroke-width="1.300" stroke-linejoin="round"/><path d="M946.74 468.86A81.2 81.2 0 0 1 977.37 447.82L991.94 485.29A41 41 0 0 0 976.47 495.91Z" fill="#1150aa" stroke="#fff" stroke-width="1.300" stroke-linejoin="round"/><path d="M977.37 447.82A81.2 81.2 0 0 1 1005.15 442.32L1005.97 482.51A41 41 0 0 0 991.94 485.29Z" fill="#e6a523" stroke="#fff" stroke-width="1.300" stroke-linejoin="round"/><path d="M1005.15 442.32A81.2 81.2 0 0 1 1006.3 442.3L1006.55 482.5A41 41 0 0 0 1005.97 482.51Z" fill="#27ab7f" stroke="#fff" stroke-width="1.300" stroke-linejoin="round"/><path d="M1006.3 442.3A81.2 81.2 0 0 1 1006.8 442.3L1006.8 482.5A41 41 0 0 0 1006.55 482.5Z" fill="#5a96e6" stroke="#fff" stroke-width="1.300" stroke-linejoin="round"/><rect x="1240.9" y="490.45" width="9.7" height="5.8" fill="#e55a69" /><text x="1255.8" y="493.35" font-size="7.3" text-anchor="start" fill="#585858" dy=".355em" textLength="21.7" lengthAdjust="spacingAndGlyphs">Trả nợ</text><rect x="1240.9" y="505.49" width="9.7" height="5.8" fill="#1150aa" /><text x="1255.8" y="508.39" font-size="7.3" text-anchor="start" fill="#585858" dy=".355em" textLength="37.7" lengthAdjust="spacingAndGlyphs">Mua đầu tư</text><rect x="1240.9" y="520.53" width="9.7" height="5.8" fill="#e6a523" /><text x="1255.8" y="523.43" font-size="7.3" text-anchor="start" fill="#585858" dy=".355em" textLength="27" lengthAdjust="spacingAndGlyphs">Cho vay</text><rect x="1240.9" y="535.57" width="9.7" height="5.8" fill="#27ab7f" /><g transform="translate(1256.2 534.27)" fill="none" stroke="#3c4048" stroke-width="1"><path d="M1.100 .6v6.600M.3 .6v2.200c0 .6.400.9.800.9s.800-.3.800-.9V.6M7.700 .6v6.600M7.700 .6c.9.500 1.100 1.500 1.100 2.400 0 .8-.500 1.200-1.100 1.300"/><circle cx="4.400" cy="3.900" r="2" fill="#f1f1f3" stroke="#8a8f98" stroke-width=".8"/></g><text x="1267.5" y="538.47" font-size="7.3" text-anchor="start" fill="#585858" dy=".355em" textLength="28" lengthAdjust="spacingAndGlyphs">Ăn uống</text><rect x="1240.9" y="550.61" width="9.7" height="5.8" fill="#5a96e6" /><g transform="translate(1256.2 549.31)"><rect x=".4" y="2.900" width="7.600" height="5" rx=".6" fill="#26282d"/><path d="M.3 2.700L7.600 .3l.5 1.500L.8 4.200z" fill="#3d4046"/><path d="M2 2.200l1-.3.4 1.300-1 .3zM4.400 1.400l1-.3.4 1.300-1 .3z" fill="#d9d9dd"/></g><text x="1267.5" y="553.51" font-size="7.3" text-anchor="start" fill="#585858" dy=".355em" textLength="21.7" lengthAdjust="spacingAndGlyphs">Giải trí</text><path d="M1567.7 523.5L1567.7 442.3A81.2 81.2 0 1 1 1507.46 577.95Z" fill="#27ab7f" stroke="#fff" stroke-width="1.300" stroke-linejoin="round"/><path d="M1567.7 523.5L1507.46 577.95A81.2 81.2 0 0 1 1553.32 443.58Z" fill="#1150aa" stroke="#fff" stroke-width="1.300" stroke-linejoin="round"/><path d="M1567.7 523.5L1553.32 443.58A81.2 81.2 0 0 1 1567.7 442.3Z" fill="#e6a523" stroke="#fff" stroke-width="1.300" stroke-linejoin="round"/><rect x="1796.4" y="505.5" width="9.7" height="5.8" fill="#27ab7f" /><g transform="translate(1811.4 504.2)"><rect x=".4" y="1.300" width="8.200" height="5.800" rx="1" fill="#f2c94c" stroke="#6b4e16" stroke-width=".8"/><rect x=".8" y="2.500" width="7.400" height="1.300" fill="#6b4e16"/></g><text x="1823.5" y="508.4" font-size="7.3" text-anchor="start" fill="#585858" dy=".355em" textLength="26.5" lengthAdjust="spacingAndGlyphs">Vay tiền</text><rect x="1796.4" y="520.54" width="9.7" height="5.8" fill="#1150aa" /><g transform="translate(1811.4 519.24)"><path d="M3 1.900V1c0-.3.2-.5.500-.5h2c.3 0 .5.200.5.500v.9" fill="none" stroke="#3a2416" stroke-width=".9"/><rect x=".4" y="1.800" width="8.200" height="5.900" rx="1" fill="#7a4a2b" stroke="#3a2416" stroke-width=".7"/><rect x="3.700" y="4" width="1.600" height="1.300" fill="#e0b35a"/></g><text x="1823.5" y="523.44" font-size="7.3" text-anchor="start" fill="#585858" dy=".355em" textLength="22.5" lengthAdjust="spacingAndGlyphs">Lương</text><rect x="1796.4" y="535.58" width="9.7" height="5.8" fill="#e6a523" /><g transform="translate(1811.4 534.28)"><rect x=".4" y="1.300" width="8.400" height="5.800" rx=".5" fill="#cfdcae" stroke="#6d7a55" stroke-width=".8"/><circle cx="4.600" cy="4.200" r="1.500" fill="#9fb184"/></g><text x="1823.5" y="538.48" font-size="7.3" text-anchor="start" fill="#585858" dy=".355em" textLength="38.5" lengthAdjust="spacingAndGlyphs">Thu tiền nợ</text><rect x="428.1" y="688.9" width="12" height="8" fill="#27ab7f" /><text x="444.2" y="692.2" font-size="7.4" text-anchor="start" fill="#585858" dy=".355em" textLength="31.8" lengthAdjust="spacingAndGlyphs">Thu nhập</text><rect x="482.5" y="688.9" width="12" height="8" fill="#e55a69" /><text x="498" y="692.2" font-size="7.4" text-anchor="start" fill="#585858" dy=".355em" textLength="25.5" lengthAdjust="spacingAndGlyphs">Chi tiêu</text><path d="M329.5 704.2L329.5 806.9" stroke="#ebebee" stroke-width="1" fill="none"/><text x="0" y="0" transform="translate(330.9 815) rotate(-23.5)" font-size="9" text-anchor="end" fill="#585858" dy=".355em">0đ</text><path d="M369.5 704.2L369.5 806.9" stroke="#ebebee" stroke-width="1" fill="none"/><text x="0" y="0" transform="translate(371.06 815) rotate(-23.5)" font-size="9" text-anchor="end" fill="#585858" dy=".355em">200.000.000đ</text><path d="M409.5 704.2L409.5 806.9" stroke="#ebebee" stroke-width="1" fill="none"/><text x="0" y="0" transform="translate(411.22 815) rotate(-23.5)" font-size="9" text-anchor="end" fill="#585858" dy=".355em">400.000.000đ</text><path d="M449.5 704.2L449.5 806.9" stroke="#ebebee" stroke-width="1" fill="none"/><text x="0" y="0" transform="translate(451.38 815) rotate(-23.5)" font-size="9" text-anchor="end" fill="#585858" dy=".355em">600.000.000đ</text><path d="M490.5 704.2L490.5 806.9" stroke="#ebebee" stroke-width="1" fill="none"/><text x="0" y="0" transform="translate(491.54 815) rotate(-23.5)" font-size="9" text-anchor="end" fill="#585858" dy=".355em">800.000.000đ</text><path d="M530.5 704.2L530.5 806.9" stroke="#ebebee" stroke-width="1" fill="none"/><text x="0" y="0" transform="translate(531.7 815) rotate(-23.5)" font-size="9" text-anchor="end" fill="#585858" dy=".355em">1.000.000.000đ</text><path d="M570.5 704.2L570.5 806.9" stroke="#ebebee" stroke-width="1" fill="none"/><text x="0" y="0" transform="translate(571.86 815) rotate(-23.5)" font-size="9" text-anchor="end" fill="#585858" dy=".355em">1.200.000.000đ</text><path d="M610.5 704.2L610.5 806.9" stroke="#ebebee" stroke-width="1" fill="none"/><text x="0" y="0" transform="translate(612.02 815) rotate(-23.5)" font-size="9" text-anchor="end" fill="#585858" dy=".355em">1.400.000.000đ</text><path d="M650.5 704.2L650.5 806.9" stroke="#ebebee" stroke-width="1" fill="none"/><text x="0" y="0" transform="translate(652.18 815) rotate(-23.5)" font-size="9" text-anchor="end" fill="#585858" dy=".355em">1.600.000.000đ</text><path d="M690.5 704.2L690.5 806.9" stroke="#ebebee" stroke-width="1" fill="none"/><text x="0" y="0" transform="translate(692.34 815) rotate(-23.5)" font-size="9" text-anchor="end" fill="#585858" dy=".355em">1.800.000.000đ</text><path d="M731.5 704.2L731.5 806.9" stroke="#ebebee" stroke-width="1" fill="none"/><text x="0" y="0" transform="translate(732.5 815) rotate(-23.5)" font-size="9" text-anchor="end" fill="#585858" dy=".355em">2.000.000.000đ</text><path d="M323.4 722.5L731 722.5" stroke="#ebebee" stroke-width="1" fill="none"/><path d="M323.4 746.5L731 746.5" stroke="#ebebee" stroke-width="1" fill="none"/><path d="M323.4 770.5L731 770.5" stroke="#ebebee" stroke-width="1" fill="none"/><path d="M323.4 795.5L731 795.5" stroke="#ebebee" stroke-width="1" fill="none"/><path d="M329.4 801.5L731 801.5" stroke="#ebebee" stroke-width="1" fill="none"/><rect x="329.4" y="705.55" width="284.53" height="4.18" fill="#27ab7f" /><rect x="329.4" y="710.91" width="273.29" height="4.18" fill="#e55a69" /><text x="320.3" y="709.87" font-size="9" text-anchor="end" fill="#585858" dy=".355em" textLength="102.6" lengthAdjust="spacingAndGlyphs">Ngân hàng Phương Đông</text><rect x="329.4" y="717.69" width="20.08" height="4.18" fill="#27ab7f" /><rect x="329.4" y="723.05" width="3.01" height="4.18" fill="#e55a69" /><rect x="329.4" y="729.83" width="20.08" height="4.18" fill="#27ab7f" /><text x="320.3" y="734.14" font-size="9" text-anchor="end" fill="#585858" dy=".355em" textLength="78.5" lengthAdjust="spacingAndGlyphs">Ngân hàng Sài Gòn</text><rect x="329.4" y="741.97" width="20.08" height="4.18" fill="#27ab7f" /><rect x="329.4" y="747.32" width="5.62" height="4.18" fill="#e55a69" /><rect x="329.4" y="754.1" width="59.64" height="4.18" fill="#27ab7f" /><rect x="329.4" y="759.46" width="16.06" height="4.18" fill="#e55a69" /><text x="320.3" y="758.42" font-size="9" text-anchor="end" fill="#585858" dy=".355em" textLength="32.5" lengthAdjust="spacingAndGlyphs">ZaloPay</text><rect x="329.4" y="766.24" width="20.08" height="4.18" fill="#27ab7f" /><rect x="329.4" y="771.6" width="7.83" height="4.18" fill="#e55a69" /><rect x="329.4" y="778.38" width="39.76" height="4.18" fill="#27ab7f" /><rect x="329.4" y="783.73" width="20.08" height="4.18" fill="#e55a69" /><text x="320.3" y="782.69" font-size="9" text-anchor="end" fill="#585858" dy=".355em" textLength="32.5" lengthAdjust="spacingAndGlyphs">VPBank</text><rect x="329.4" y="790.52" width="390.56" height="4.18" fill="#27ab7f" /><rect x="329.4" y="795.87" width="386.54" height="4.18" fill="#e55a69" /><path d="M827.6 827.5L1303 827.5" stroke="#ebebee" stroke-width="1" fill="none"/><text x="824.9" y="827.4" font-size="7.4" text-anchor="end" fill="#585858" dy=".355em">0đ</text><path d="M827.6 811.5L1303 811.5" stroke="#ebebee" stroke-width="1" fill="none"/><text x="824.9" y="811.94" font-size="7.4" text-anchor="end" fill="#585858" dy=".355em">10.000.000đ</text><path d="M827.6 796.5L1303 796.5" stroke="#ebebee" stroke-width="1" fill="none"/><text x="824.9" y="796.49" font-size="7.4" text-anchor="end" fill="#585858" dy=".355em">20.000.000đ</text><path d="M827.6 781.5L1303 781.5" stroke="#ebebee" stroke-width="1" fill="none"/><text x="824.9" y="781.03" font-size="7.4" text-anchor="end" fill="#585858" dy=".355em">30.000.000đ</text><path d="M827.6 765.5L1303 765.5" stroke="#ebebee" stroke-width="1" fill="none"/><text x="824.9" y="765.58" font-size="7.4" text-anchor="end" fill="#585858" dy=".355em">40.000.000đ</text><path d="M827.6 750.5L1303 750.5" stroke="#ebebee" stroke-width="1" fill="none"/><text x="824.9" y="750.12" font-size="7.4" text-anchor="end" fill="#585858" dy=".355em">50.000.000đ</text><path d="M827.6 734.5L1303 734.5" stroke="#ebebee" stroke-width="1" fill="none"/><text x="824.9" y="734.67" font-size="7.4" text-anchor="end" fill="#585858" dy=".355em">60.000.000đ</text><path d="M827.6 719.5L1303 719.5" stroke="#ebebee" stroke-width="1" fill="none"/><text x="824.9" y="719.21" font-size="7.4" text-anchor="end" fill="#585858" dy=".355em">70.000.000đ</text><path d="M827.6 703.5L1303 703.5" stroke="#ebebee" stroke-width="1" fill="none"/><text x="824.9" y="703.76" font-size="7.4" text-anchor="end" fill="#585858" dy=".355em">80.000.000đ</text><path d="M827.6 688.5L1303 688.5" stroke="#ebebee" stroke-width="1" fill="none"/><text x="824.9" y="688.3" font-size="7.4" text-anchor="end" fill="#585858" dy=".355em">90.000.000đ</text><path d="M833.5 688.3L833.5 833" stroke="#ebebee" stroke-width="1" fill="none"/><path d="M950.5 688.3L950.5 833" stroke="#ebebee" stroke-width="1" fill="none"/><path d="M1068.5 688.3L1068.5 833" stroke="#ebebee" stroke-width="1" fill="none"/><path d="M1185.5 688.3L1185.5 833" stroke="#ebebee" stroke-width="1" fill="none"/><rect x="850.15" y="703.29" width="83.8" height="124.11" fill="#1150aa" /><text x="891.75" y="839.5" font-size="7.3" text-anchor="middle" fill="#585858" dy=".355em" textLength="28.8" lengthAdjust="spacingAndGlyphs">₿ Crypto</text><g transform="translate(989 835)"><rect x=".4" y=".4" width="7.600" height="7.600" rx=".8" fill="#f4f4f6" stroke="#7d8590" stroke-width=".8"/><rect x="1.700" y="4.300" width="1.300" height="2.800" fill="#3f9b5c"/><rect x="3.600" y="2" width="1.300" height="5.100" fill="#3a7fd0"/><rect x="5.500" y="3.200" width="1.300" height="3.900" fill="#2f8f8a"/></g><text x="1000.6" y="839.5" font-size="7.3" text-anchor="start" fill="#585858" dy=".355em" textLength="30" lengthAdjust="spacingAndGlyphs">Cổ phiếu</text><g transform="translate(1100.75 835)"><path d="M.6 .3h2.600l1.200 2.600L5.600 .3h2.600L6 4H2.800z" fill="#d2393f"/><circle cx="4.400" cy="5.400" r="2.700" fill="#f0b530" stroke="#b47a14" stroke-width=".7"/></g><text x="1112.35" y="839.5" font-size="7.3" text-anchor="start" fill="#585858" dy=".355em" textLength="41.5" lengthAdjust="spacingAndGlyphs">Vàng đầu tư</text><g transform="translate(1222.5 835)"><rect x=".8" y="1" width="6.200" height="7.400" rx=".8" fill="#f2f2f4" stroke="#4a4e57" stroke-width=".9"/><rect x="2.500" y=".2" width="2.800" height="1.700" rx=".5" fill="#4a4e57"/><path d="M2.200 3.800h3.400M2.200 5.300h3.400M2.200 6.800h2.400" stroke="#8a8f98" stroke-width=".6"/></g><text x="1234.1" y="839.5" font-size="7.3" text-anchor="start" fill="#585858" dy=".355em" textLength="33" lengthAdjust="spacingAndGlyphs">Trái phiếu</text><path d="M1398.1 827.5L1869.2 827.5" stroke="#ebebee" stroke-width="1" fill="none"/><text x="1395.2" y="827.4" font-size="7.4" text-anchor="end" fill="#585858" dy=".355em">0đ</text><path d="M1398.1 813.5L1869.2 813.5" stroke="#ebebee" stroke-width="1" fill="none"/><text x="1395.2" y="813.49" font-size="7.4" text-anchor="end" fill="#585858" dy=".355em">20.000.000đ</text><path d="M1398.1 799.5L1869.2 799.5" stroke="#ebebee" stroke-width="1" fill="none"/><text x="1395.2" y="799.58" font-size="7.4" text-anchor="end" fill="#585858" dy=".355em">40.000.000đ</text><path d="M1398.1 785.5L1869.2 785.5" stroke="#ebebee" stroke-width="1" fill="none"/><text x="1395.2" y="785.67" font-size="7.4" text-anchor="end" fill="#585858" dy=".355em">60.000.000đ</text><path d="M1398.1 771.5L1869.2 771.5" stroke="#ebebee" stroke-width="1" fill="none"/><text x="1395.2" y="771.76" font-size="7.4" text-anchor="end" fill="#585858" dy=".355em">80.000.000đ</text><path d="M1398.1 757.5L1869.2 757.5" stroke="#ebebee" stroke-width="1" fill="none"/><text x="1395.2" y="757.85" font-size="7.4" text-anchor="end" fill="#585858" dy=".355em">100.000.000đ</text><path d="M1398.1 743.5L1869.2 743.5" stroke="#ebebee" stroke-width="1" fill="none"/><text x="1395.2" y="743.94" font-size="7.4" text-anchor="end" fill="#585858" dy=".355em">120.000.000đ</text><path d="M1398.1 730.5L1869.2 730.5" stroke="#ebebee" stroke-width="1" fill="none"/><text x="1395.2" y="730.03" font-size="7.4" text-anchor="end" fill="#585858" dy=".355em">140.000.000đ</text><path d="M1398.1 716.5L1869.2 716.5" stroke="#ebebee" stroke-width="1" fill="none"/><text x="1395.2" y="716.12" font-size="7.4" text-anchor="end" fill="#585858" dy=".355em">160.000.000đ</text><path d="M1398.1 702.5L1869.2 702.5" stroke="#ebebee" stroke-width="1" fill="none"/><text x="1395.2" y="702.21" font-size="7.4" text-anchor="end" fill="#585858" dy=".355em">180.000.000đ</text><path d="M1398.1 688.5L1869.2 688.5" stroke="#ebebee" stroke-width="1" fill="none"/><text x="1395.2" y="688.3" font-size="7.4" text-anchor="end" fill="#585858" dy=".355em">200.000.000đ</text><path d="M1403.5 688.3L1403.5 833" stroke="#ebebee" stroke-width="1" fill="none"/><rect x="1468.7" y="688.3" width="335.3" height="139.1" fill="#e55a69" /><g transform="translate(1602.35 835.2)" fill="#2a2d33"><circle cx="2.900" cy="2.300" r="1.900"/><circle cx="6.300" cy="2.300" r="1.900"/><path d="M0 8c0-2.400 1.200-3.600 2.900-3.600 .7 0 1.300.2 1.700.600 .4-.4 1-.600 1.700-.600C8 4.400 9.200 5.600 9.200 8z"/></g><text x="1614.15" y="839.5" font-size="7.3" text-anchor="start" fill="#585858" dy=".355em" textLength="56.5" lengthAdjust="spacingAndGlyphs">Cho vay cá nhân</text></svg>
<div class="a" style="left:199px;top:889px;width:1687px;height:200px;background:#fff;box-shadow:0 1px 5px rgba(45,55,90,.085);border-radius:15px;"></div>
<span class="t" style="left:214.2px;top:904.5px;font-size:13.07px;line-height:16px;color:#0b0b78;letter-spacing:0.49px;-webkit-text-stroke:.22px currentColor;">Giao dịch gần đây</span>
<span class="t" style="left:1816px;top:905.8px;font-size:10.75px;line-height:13px;color:#2a22a8;letter-spacing:0.4px;">Xem tất cả</span>
<div class="a" style="left:214px;top:931px;width:825px;height:51.5px;background:#f5f7fd;border-radius:9px;"></div>
<div class="a" style="left:222.7px;top:939.7px;width:34px;height:34px;background:#fee2e2;border-radius:50%;"></div>
<svg class="a" style="left:234.3px;top:950.3px;" width="10.8" height="12.6" viewBox="0 0 12 14"><path fill="none" stroke="#dc3b3b" stroke-width="1.900" stroke-linecap="round" stroke-linejoin="round" d="M6 1V12.600M1.200 8L6 12.800L10.800 8"/></svg>
<span class="t" style="left:267.7px;top:943px;font-size:11.44px;line-height:14px;color:#2b2f3a;letter-spacing:0.4px;-webkit-text-stroke:.22px currentColor;">Ăn uống</span>
<span class="t" style="left:267.7px;top:959.6px;font-size:9.65px;line-height:12px;color:#8a8f9c;letter-spacing:0.28px;">06/02/2026 · ZaloPay</span>
<span class="t" style="left:959.5px;top:950.6px;font-size:11.82px;line-height:14px;color:#d63a45;font-weight:700;letter-spacing:0.32px;">- 1.000.000đ</span>
<div class="a" style="left:1046.3px;top:931px;width:825.2px;height:51.5px;background:#f5f7fd;border-radius:9px;"></div>
<div class="a" style="left:1055px;top:939.7px;width:34px;height:34px;background:#d1fae5;border-radius:50%;"></div>
<svg class="a" style="left:1066.6px;top:950.3px;" width="10.8" height="12.6" viewBox="0 0 12 14"><path fill="none" stroke="#1fae74" stroke-width="1.900" stroke-linecap="round" stroke-linejoin="round" d="M6 13V1.400M1.200 6L6 1.200L10.800 6"/></svg>
<span class="t" style="left:1100px;top:943.5px;font-size:11.08px;line-height:13px;color:#2b2f3a;letter-spacing:0.21px;-webkit-text-stroke:.22px currentColor;">Lương</span>
<span class="t" style="left:1100px;top:960.1px;font-size:9.41px;line-height:11px;color:#8a8f9c;letter-spacing:0.16px;">14/12/2025 · ZaloPay</span>
<span class="t" style="left:1775px;top:950.6px;font-size:11.82px;line-height:14px;color:#22a573;font-weight:700;letter-spacing:0.34px;">+ 100.000.000đ</span>
<div class="a" style="left:214px;top:990.2px;width:825px;height:51.5px;background:#f5f7fd;border-radius:9px;"></div>
<div class="a" style="left:222.7px;top:998.9px;width:34px;height:34px;background:#d1fae5;border-radius:50%;"></div>
<svg class="a" style="left:234.3px;top:1009.5px;" width="10.8" height="12.6" viewBox="0 0 12 14"><path fill="none" stroke="#1fae74" stroke-width="1.900" stroke-linecap="round" stroke-linejoin="round" d="M6 13V1.400M1.200 6L6 1.200L10.800 6"/></svg>
<span class="t" style="left:267.7px;top:1002.7px;font-size:11.08px;line-height:13px;color:#2b2f3a;letter-spacing:0.21px;-webkit-text-stroke:.22px currentColor;">Lương</span>
<span class="t" style="left:267.7px;top:1019.3px;font-size:9.41px;line-height:11px;color:#8a8f9c;letter-spacing:0.16px;">15/12/2025 · ZaloPay</span>
<span class="t" style="left:942.5px;top:1009.8px;font-size:11.82px;line-height:14px;color:#22a573;font-weight:700;letter-spacing:0.34px;">+ 100.000.000đ</span>
<div class="a" style="left:1046.3px;top:990.2px;width:825.2px;height:51.5px;background:#f5f7fd;border-radius:9px;"></div>
<div class="a" style="left:1055px;top:998.9px;width:34px;height:34px;background:#d1fae5;border-radius:50%;"></div>
<svg class="a" style="left:1066.6px;top:1009.5px;" width="10.8" height="12.6" viewBox="0 0 12 14"><path fill="none" stroke="#1fae74" stroke-width="1.900" stroke-linecap="round" stroke-linejoin="round" d="M6 13V1.400M1.200 6L6 1.200L10.800 6"/></svg>
<span class="t" style="left:1100px;top:1002.7px;font-size:11.08px;line-height:13px;color:#2b2f3a;letter-spacing:0.21px;-webkit-text-stroke:.22px currentColor;">Lương</span>
<span class="t" style="left:1100px;top:1018.8px;font-size:9.68px;line-height:12px;color:#8a8f9c;letter-spacing:0.29px;">06/02/2026 · Vietcombank</span>
<span class="t" style="left:1780.5px;top:1009.8px;font-size:11.93px;line-height:14px;color:#22a573;font-weight:700;letter-spacing:0.39px;">+ 50.000.000đ</span>
</div>
</body></html>
